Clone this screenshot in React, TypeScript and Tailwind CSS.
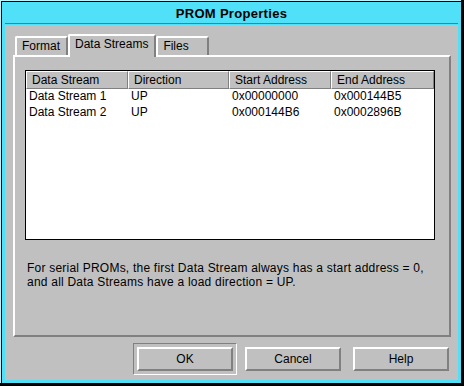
import React from "react";

const rows = [
  ["Data Stream 1", "UP", "0x00000000", "0x000144B5"],
  ["Data Stream 2", "UP", "0x000144B6", "0x0002896B"],
];
const headers = ["Data Stream", "Direction", "Start Address", "End Address"];
const colW = ["w-[102px]", "w-[101px]", "w-[102px]", "w-[103px]"];

function Tab({ label, selected }: { label: string; selected?: boolean }) {
  return (
    <div
      className={
        "min-w-[53px] border-t-2 border-l-2 border-r-2 border-t-white border-l-white border-r-[#808080] rounded-t-[2px] pl-[5px] pr-[6px] pt-[1px] leading-[14px] whitespace-nowrap bg-[#c0c0c0] " +
        (selected ? "h-[23px] -mb-[2px] relative z-10" : "h-[19px]")
      }
    >
      {label}
    </div>
  );
}

function Button({ label, className = "" }: { label: string; className?: string }) {
  return (
    <div
      className={
        "w-[96px] h-[24px] border-2 border-t-white border-l-white border-b-[#808080] border-r-[#808080] flex items-center justify-center leading-[14px] bg-[#c0c0c0] " +
        className
      }
    >
      {label}
    </div>
  );
}

export default function App() {
  return (
    <div className="w-[464px] h-[386px] bg-black font-['Liberation_Sans',Arial,sans-serif] text-[12px] text-black">
      <div className="w-[461px] h-[383px] border-t border-l border-[#b8f6ff] bg-[#50e0f8]">
        <div className="h-full border-t border-l border-black flex flex-col px-[3px] pb-[3px]">
          <div className="h-[22px] border-b border-[#2890a0] flex justify-center pt-[4px]">
            <span className="font-bold text-[13px] leading-[15px] tracking-[0.3px]">PROM Properties</span>
          </div>
          <div className="mt-[1px] flex-1 bg-[#c0c0c0] flex flex-col pt-[9px]">
            <div className="flex items-end h-[21px] pl-[10px]">
              <Tab label="Format" />
              <Tab label="Data Streams" selected />
              <Tab label="Files" />
            </div>
            <div className="ml-[8px] w-[438px] h-[282px] border-2 border-t-white border-l-white border-b-[#808080] border-r-[#808080] pl-[10px] pt-[13px]">
              <div className="w-[410px] h-[170px] border border-black bg-white flex flex-col">
                <div className="flex h-[18px] bg-[#c0c0c0]">
                  {headers.map((h, i) => (
                    <div
                      key={h}
                      className={
                        colW[i] +
                        " h-[18px] border-t border-l border-t-white border-l-white border-r border-b border-r-[#808080] border-b-[#808080] pl-[5px] pt-[1px] leading-[14px] whitespace-nowrap"
                      }
                    >
                      {h}
                    </div>
                  ))}
                </div>
                {rows.map((r) => (
                  <div key={r[0]} className="flex h-[16px]">
                    {r.map((c, i) => (
                      <div key={i} className={colW[i] + " pl-[3px] leading-[14px] whitespace-nowrap"}>
                        {c}
                      </div>
                    ))}
                  </div>
                ))}
              </div>
              <div className="mt-[21px] pl-[2px] leading-[14px] whitespace-nowrap tracking-[0.22px]">
                <div>For serial PROMs, the first Data Stream always has a start address = 0,</div>
                <div>and all Data Streams have a load direction = UP.</div>
              </div>
            </div>
            <div className="mt-[6px] flex items-center justify-end pr-[9px]">
              <div className="w-[104px] h-[32px] border border-t-[#808080] border-l-[#808080] border-b-white border-r-white p-[3px]">
                <Button label="OK" />
              </div>
              <Button label="Cancel" className="ml-[8px]" />
              <Button label="Help" className="ml-[12px]" />
            </div>
          </div>
        </div>
      </div>
    </div>
  );
}
